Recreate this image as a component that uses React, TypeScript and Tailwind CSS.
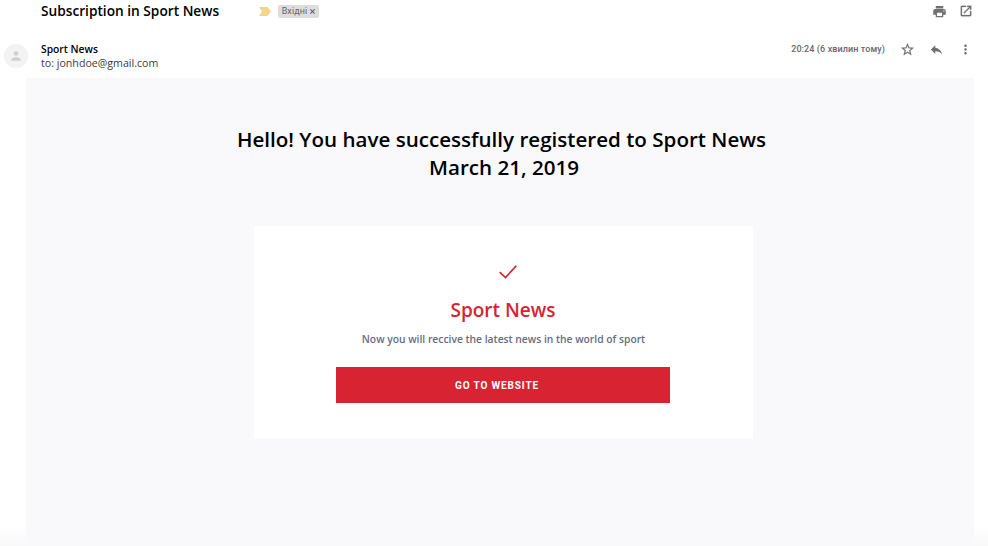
import React from "react";

const PrintIcon = () => (
  <svg viewBox="0 0 24 24" className="size-[15px]" fill="currentColor">
    <path d="M19 8H5c-1.66 0-3 1.34-3 3v6h4v4h12v-4h4v-6c0-1.66-1.34-3-3-3zm-3 11H8v-5h8v5zm3-7c-.55 0-1-.45-1-1s.45-1 1-1 1 .45 1 1-.45 1-1 1zm-1-9H6v4h12V3z" />
  </svg>
);

const OpenIcon = () => (
  <svg viewBox="0 0 24 24" className="size-[14px]" fill="currentColor" stroke="currentColor" strokeWidth=".5">
    <path d="M19 19H5V5h7V3H5a2 2 0 0 0-2 2v14a2 2 0 0 0 2 2h14c1.1 0 2-.9 2-2v-7h-2v7zM14 3v2h3.59l-9.83 9.83 1.41 1.41L19 6.41V10h2V3h-7z" />
  </svg>
);

const StarIcon = () => (
  <svg viewBox="0 0 24 24" className="size-[15px]" fill="currentColor" stroke="currentColor" strokeWidth=".4">
    <path d="M22 9.24l-7.19-.62L12 2 9.19 8.63 2 9.24l5.46 4.73L5.82 21 12 17.27 18.18 21l-1.63-7.03L22 9.24zM12 15.4l-3.76 2.27 1-4.28-3.32-2.88 4.38-.38L12 6.1l1.71 4.04 4.38.38-3.32 2.88 1 4.28L12 15.4z" />
  </svg>
);

const ReplyIcon = () => (
  <svg viewBox="0 0 24 24" className="size-[15px]" fill="currentColor">
    <path d="M10 9V5l-7 7 7 7v-4.1c5 0 8.5 1.6 11 5.1-1-5-4-10-11-11z" />
  </svg>
);

const MoreIcon = () => (
  <svg viewBox="0 0 24 24" className="size-[15px]" fill="currentColor">
    <path d="M12 8c1.1 0 2-.9 2-2s-.9-2-2-2-2 .9-2 2 .9 2 2 2zm0 2c-1.1 0-2 .9-2 2s.9 2 2 2 2-.9 2-2-.9-2-2-2zm0 6c-1.1 0-2 .9-2 2s.9 2 2 2 2-.9 2-2-.9-2-2-2z" />
  </svg>
);

function SubjectBar() {
  return (
    <div className="flex h-[22px] items-center pr-[15px] pl-[41px]">
      <h1 className="w-[218px] text-[13.700px] leading-[22px] font-semibold text-black">Subscription in Sport News</h1>
      <svg viewBox="0 0 12 8" className="mr-[7px] h-[9px] w-3" preserveAspectRatio="none" fill="#f3d58f">
        <path d="M0 0h8.5L12 4 8.500 8H0l3-4z" />
      </svg>
      <span className="flex h-[13px] w-[41px] items-center justify-center gap-[3px] rounded-[2px] bg-[#dddddd] font-['Roboto',sans-serif] text-[9px] leading-[13px] tracking-[0.1px] text-[#666666]">
        Вхідні
        <svg viewBox="0 0 6 6" className="size-[5px]" stroke="#666666" strokeWidth="1.4">
          <path d="M.5 .5l5 5M5.500 .5l-5 5" />
        </svg>
      </span>
      <div className="ml-auto flex items-center gap-[12px] text-[#707070]">
        <PrintIcon />
        <OpenIcon />
      </div>
    </div>
  );
}

function SenderBar() {
  return (
    <div className="flex h-14 items-start pr-[15px] pl-1">
      <div className="mt-[22px] flex size-6 items-center justify-center rounded-full border border-[#f0f0f0] bg-[#f3f3f3]">
        <svg viewBox="0 0 10 10" className="size-[10px]" fill="#cfcfcf">
          <circle cx="5" cy="2.500" r="2.200" />
          <path d="M.4 9.700V8.500C.4 7 3.300 6.200 5 6.200s4.600.8 4.600 2.300v1.200z" />
        </svg>
      </div>
      <div className="mt-5 ml-[13px] text-[10.650px] leading-[14px]">
        <div className="text-[10.300px] font-semibold text-black">Sport News</div>
        <div className="text-[#3c3c3c]">to: jonhdoe@gmail.com</div>
      </div>
      <div className="mt-[19px] ml-auto flex items-center text-[#707070]">
        <span className="mr-[15px] font-['Roboto',sans-serif] text-[9px] leading-4 font-medium tracking-[0.1px] text-[#686868]">20:24 (6 хвилин тому)</span>
        <StarIcon />
        <span className="ml-[14px]"><ReplyIcon /></span>
        <span className="ml-[14px]"><MoreIcon /></span>
      </div>
    </div>
  );
}

export default function App() {
  return (
    <div className="flex h-[546px] w-[988px] flex-col overflow-hidden bg-linear-to-b from-white from-[96%] to-[#f9f9f9] font-['Open_Sans',sans-serif]">
      <SubjectBar />
      <SenderBar />
      <main className="mr-[14px] ml-[26px] flex flex-1 flex-col items-center bg-[#f9f9fc]">
        <h2 className="mt-[48px] ml-[3px] text-center text-[20.580px] leading-[27.500px] font-semibold whitespace-nowrap text-black">
          Hello! You have successfully registered to Sport News
          <span className="block pl-[5px]">March 21, 2019</span>
        </h2>
        <section className="mt-[45px] ml-[7px] flex h-[213px] w-[499px] flex-col items-center bg-white">
          <svg viewBox="0 0 18 14" className="mt-[39px] ml-[9px] h-[14px] w-[18px]" fill="none" stroke="#d82332" strokeWidth="1.700">
            <path d="M.7 7.200L6.500 12.600 17.300.7" />
          </svg>
          <h3 className="mt-[18px] mr-px text-[19px] leading-[27px] font-semibold text-[#d82332]">Sport News</h3>
          <p className="mt-[8px] text-[10.300px] leading-[14px] font-semibold text-[#666c84]">Now you will reccive the latest news in the world of sport</p>
          <button className="mt-[21px] mr-[2px] h-9 w-[334px] bg-[#d82332] pt-px pr-[11px] font-['Roboto',sans-serif] text-[10px] font-bold tracking-[0.85px] text-white">
            GO TO WEBSITE
          </button>
        </section>
      </main>
    </div>
  );
}
